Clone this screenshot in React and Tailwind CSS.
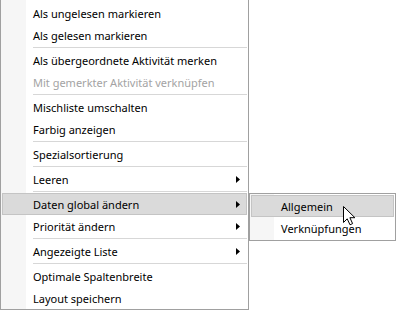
const MAIN = [
  { label: "Als ungelesen markieren" },
  { label: "Als gelesen markieren" },
  { sep: true },
  { label: "Als übergeordnete Aktivität merken" },
  { label: "Mit gemerkter Aktivität verknüpfen", disabled: true },
  { sep: true },
  { label: "Mischliste umschalten" },
  { label: "Farbig anzeigen" },
  { sep: true },
  { label: "Spezialsortierung" },
  { sep: true },
  { label: "Leeren", sub: true },
  { sep: true },
  { label: "Daten global ändern", sub: true, active: true },
  { label: "Priorität ändern", sub: true },
  { sep: true },
  { label: "Angezeigte Liste", sub: true },
  { sep: true },
  { label: "Optimale Spaltenbreite" },
  { label: "Layout speichern" },
];

function Arrow() {
  return (
    <svg width="4" height="7" viewBox="0 0 4 7" className="ml-auto mr-[6px] shrink-0">
      <polygon points="0,0 4,3.5 0,7" fill="#000" />
    </svg>
  );
}

function Item({ label, disabled, sub, active, pad = "pl-[30px]" }) {
  return (
    <div
      className={`flex h-[22px] items-center border pt-[1px] ${pad} ${
        active ? "border-[#c4c4c4] bg-[#dadada]" : "border-transparent"
      } ${disabled ? "text-[#a3a3a3]" : "text-black"}`}
    >
      <span className="whitespace-nowrap">{label}</span>
      {sub ? <Arrow /> : null}
    </div>
  );
}

function Cursor() {
  return (
    <svg width="14" height="21" viewBox="0 0 14 21" className="absolute left-[342px] top-[205px]">
      <path
        d="M1.5 1.5 L1.5 17.5 L5.2 13.8 L8 19.8 L10.6 18.6 L7.9 12.7 L12.9 12.7 Z"
        fill="#fff"
        stroke="#000"
        strokeWidth="1"
        strokeLinejoin="miter"
      />
    </svg>
  );
}

export default function App() {
  return (
    <div
      className="relative h-[311px] w-[396px] overflow-hidden bg-white text-[11px] leading-none"
      style={{ fontFamily: '"Noto Sans", "Open Sans", sans-serif' }}
    >
      <div className="w-[249px] border-x border-b border-[#a0a0a0] bg-[linear-gradient(to_right,#f6f6f6_0,#f6f6f6_25px,#ffffff_25px)] px-[1px] pt-[2px]">
        {MAIN.map((it, i) =>
          it.sep ? (
            <div key={i} className="flex h-[3px] items-center pl-[31px]">
              <div className="h-px w-full bg-[#d7d7d7]" />
            </div>
          ) : (
            <Item key={i} {...it} />
          )
        )}
      </div>

      <div className="absolute left-[249px] top-[193px] w-[147px] border border-[#a0a0a0] bg-[linear-gradient(to_right,#f6f6f6_0,#f6f6f6_24px,#ffffff_24px)] p-[1px]">
        <Item label="Allgemein" active pad="pl-[29px]" />
        <Item label="Verknüpfungen" pad="pl-[29px]" />
      </div>

      <Cursor />
    </div>
  );
}
